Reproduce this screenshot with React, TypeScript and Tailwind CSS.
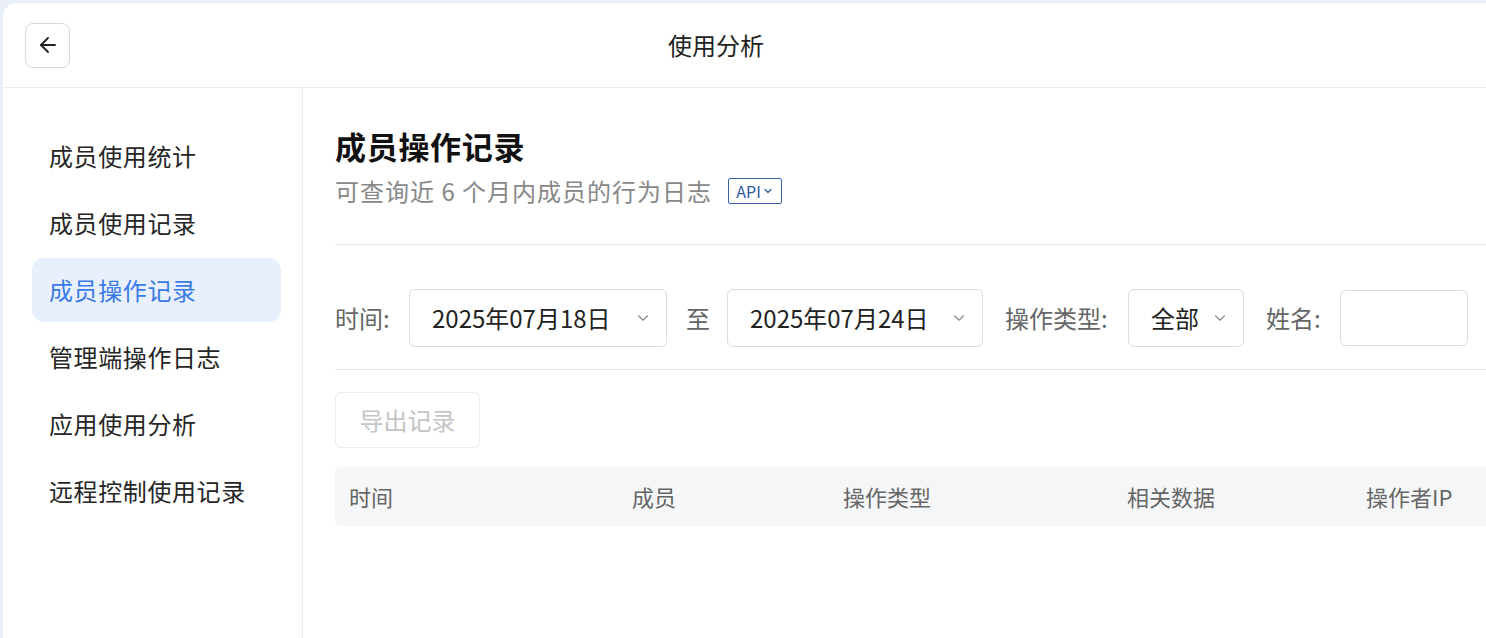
import React from "react";
import { ArrowLeft, ChevronDown } from "lucide-react";

const menu = [
  "成员使用统计",
  "成员使用记录",
  "成员操作记录",
  "管理端操作日志",
  "应用使用分析",
  "远程控制使用记录",
];

const columns = [
  { label: "时间", w: "w-[283px]" },
  { label: "成员", w: "w-[211px]" },
  { label: "操作类型", w: "w-[284px]" },
  { label: "相关数据", w: "w-[239px]" },
  { label: "操作者IP", w: "w-[200px]" },
];

const Select: React.FC<{ text: string; w: string }> = ({ text, w }) => (
  <div
    className={`${w} h-[58px] flex items-center justify-between pl-[22px] pr-[14px] border border-[#dcdcdc] rounded-md text-[24px] text-[#222]`}
  >
    <span>{text}</span>
    <ChevronDown size={18} strokeWidth={1.5} className="text-[#888]" />
  </div>
);

const App: React.FC = () => {
  return (
    <div
      className="w-[1486px] h-[638px] bg-[#e9eef7] overflow-hidden pl-[3px] pt-[3px]"
      style={{ fontFamily: '"Noto Sans CJK SC", "Noto Sans", sans-serif' }}
    >
      <div className="w-[1500px] h-[640px] bg-white rounded-tl-[14px] flex flex-col">
        {/* header */}
        <div className="h-[85px] flex items-center pl-[22px] border-b border-[#ececec] shrink-0">
          <button className="w-[45px] h-[45px] rounded-lg border border-[#d9d9d9] flex items-center justify-center text-[#222]">
            <ArrowLeft size={24} strokeWidth={1.8} />
          </button>
          <div className="ml-[598px] text-[24px] text-[#222] leading-none">使用分析</div>
        </div>

        <div className="flex flex-1">
          {/* sidebar */}
          <div className="w-[300px] border-r border-[#ececec] pt-[36px] pl-[29px] flex flex-col gap-[3px] shrink-0">
            {menu.map((m) => {
              const active = m === "成员操作记录";
              return (
                <div
                  key={m}
                  className={`w-[249px] h-[64px] rounded-xl flex items-center pl-[17px] text-[24px] tracking-[0.6px] ${
                    active ? "bg-[#e8f0fd] text-[#3a7be6]" : "text-[#262626]"
                  }`}
                >
                  {m}
                </div>
              );
            })}
          </div>

          {/* main */}
          <div className="flex-1 pl-[32px] pt-[38px]">
            <h1 className="h-[40px] leading-[40px] text-[31px] font-bold text-[#111] tracking-[0.7px]">
              成员操作记录
            </h1>
            <div className="mt-[7px] h-[36px] flex items-center text-[24px] text-[#888]">
              <span className="tracking-[1px]">可查询近 6 个月内成员的行为日志</span>
              <span className="ml-[16px] h-[26px] w-[54px] flex items-center justify-center gap-[1px] border border-[#3b64a8] rounded-[2px] text-[16px] text-[#2f5a9e] leading-none">
                API
                <ChevronDown size={12} strokeWidth={2.5} />
              </span>
            </div>

            <div className="mt-[35px] border-t border-[#e8e8e8]" />

            <div className="mt-[44px] h-[58px] flex items-center text-[24px]">
              <span className="text-[#666] w-[74px]">时间:</span>
              <Select text="2025年07月18日" w="w-[258px]" />
              <span className="text-[#666] ml-[19px] mr-[17px]">至</span>
              <Select text="2025年07月24日" w="w-[256px]" />
              <span className="text-[#666] ml-[22px] w-[123px]">操作类型:</span>
              <Select text="全部" w="w-[116px]" />
              <span className="text-[#666] ml-[22px] w-[74px]">姓名:</span>
              <div className="w-[128px] h-[56px] border border-[#dcdcdc] rounded-md" />
            </div>

            <div className="mt-[22px] border-t border-[#e8e8e8]" />

            <button className="mt-[22px] w-[145px] h-[56px] border border-[#ededed] rounded-md text-[24px] text-[#c4c4c4]">
              导出记录
            </button>

            <div className="mt-[19px] h-[59px] bg-[#f5f6f8] rounded-l-md flex items-center pl-[14px] text-[22px] text-[#666]">
              {columns.map((c) => (
                <div key={c.label} className={`${c.w} shrink-0`}>
                  {c.label}
                </div>
              ))}
            </div>
          </div>
        </div>
      </div>
    </div>
  );
};

export default App;
